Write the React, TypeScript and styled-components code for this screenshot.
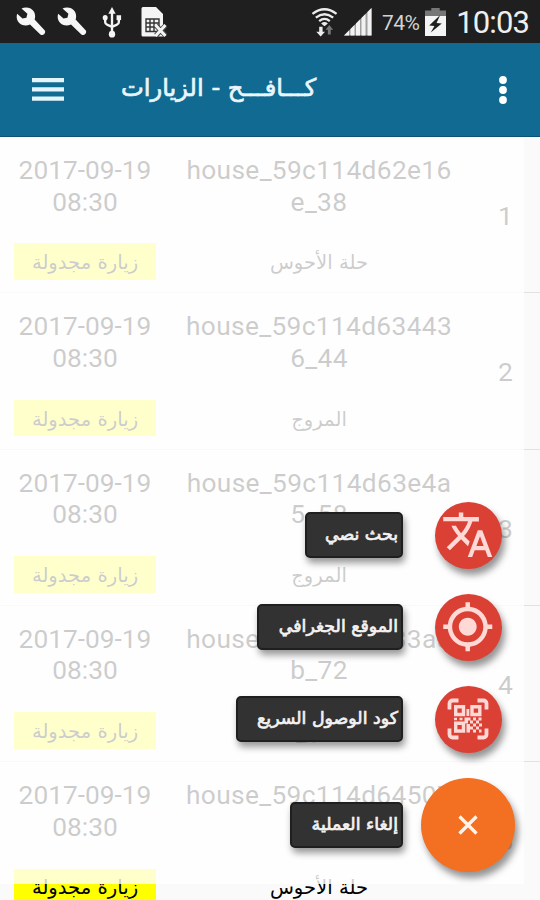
import React from 'react';
import styled, { createGlobalStyle } from 'styled-components';
import { MdTranslate, MdGpsFixed } from 'react-icons/md';

const GlobalStyle = createGlobalStyle`
  * { box-sizing: border-box; }
  html, body { margin: 0; padding: 0; background: #fafafa; overflow: hidden; }
`;

const Screen = styled.div`
  position: relative;
  width: 540px;
  height: 900px;
  overflow: hidden;
  display: flex;
  flex-direction: column;
  background: #fafafa;
  font-family: Roboto, 'DejaVu Sans', sans-serif;
`;

const StatusBar = styled.header`
  flex: none;
  height: 43px;
  padding: 1px 11px 0 16px;
  background: #1f1f1f;
  color: #efefef;
  display: flex;
  align-items: center;
  justify-content: space-between;
`;

const StatusGroup = styled.div<{ $gap: number }>`
  display: flex;
  align-items: center;
  gap: ${(p) => p.$gap}px;
`;

const Percent = styled.span`
  font-size: 21px;
  letter-spacing: -0.6px;
  color: #d2d2d2;
  margin: 2px 0 0 4px;
`;

const Clock = styled.span`
  font-size: 31px;
  letter-spacing: -0.9px;
  margin-left: 4px;
`;

const AppBar = styled.div`
  flex: none;
  height: 94px;
  background: #106a91;
  border-bottom: 1px solid #0b5279;
  display: flex;
  align-items: center;
  padding: 0 32px 0 32px;
`;

const Title = styled.h1`
  margin: 0 auto 4px 57px;
  direction: rtl;
  color: #e9f6fb;
  font: 400 24.2px 'DejaVu Sans', sans-serif;
  -webkit-text-stroke: 0.7px #e9f6fb;
  white-space: nowrap;
`;

const List = styled.main`
  flex: 1;
  min-height: 0;
  overflow: hidden;
`;

const Visit = styled.article`
  height: 156.3px;
  padding: 18.2px 14px 0;
  border-bottom: 1px solid #e2e2e2;
  display: grid;
  grid-template-columns: 142px 326px 44px;
  color: #000;
`;

const Column = styled.div`
  display: flex;
  flex-direction: column;
  align-items: center;
`;

const Value = styled.div<{ $spacing?: number }>`
  height: 88.3px;
  text-align: center;
  font-size: 26.3px;
  letter-spacing: ${(p) => p.$spacing ?? 0}px;
  line-height: 31.4px;
  white-space: pre-line;
`;

const Tag = styled.div<{ $bg?: string }>`
  width: 142px;
  height: 36.5px;
  padding-top: 2px;
  display: flex;
  align-items: center;
  justify-content: center;
  direction: rtl;
  background: ${(p) => p.$bg ?? 'transparent'};
  font: 19.6px 'DejaVu Sans', sans-serif;
  white-space: nowrap;
`;

const Index = styled.div`
  padding-top: 45px;
  text-align: center;
  font-size: 26.5px;
  line-height: 31px;
  margin-left: 3px;
`;

const Scrim = styled.div`
  position: absolute;
  left: 0;
  top: 137px;
  width: 524px;
  height: 747px;
  background: rgba(255, 255, 255, 0.8);
`;

const SpeedDial = styled.div`
  position: absolute;
  right: 25px;
  top: 501.5px;
  display: flex;
  flex-direction: column;
  gap: 25px;
`;

const DialRow = styled.div`
  display: flex;
  align-items: center;
  justify-content: flex-end;
`;

const DialLabel = styled.span<{ $width: number }>`
  width: ${(p) => p.$width}px;
  height: 46px;
  padding: 0 3px 2px;
  border-radius: 5px;
  border: 2px solid #1f1f1f;
  background: #323232;
  box-shadow: 2px 5px 7px rgba(0, 0, 0, 0.4);
  color: #f2f2f2;
  direction: rtl;
  display: flex;
  align-items: center;
  font: 400 17.4px 'DejaVu Sans', sans-serif;
  -webkit-text-stroke: 0.7px #f2f2f2;
  white-space: nowrap;
`;

const Fab = styled.button<{ $main?: boolean }>`
  flex: none;
  width: ${(p) => (p.$main ? 94 : 67)}px;
  height: ${(p) => (p.$main ? 94 : 67)}px;
  margin: ${(p) => (p.$main ? '0 0 0 18px' : '0 13.5px 0 31.5px')};
  padding: 0;
  border: 0;
  border-radius: 50%;
  background: ${(p) => (p.$main ? '#f36f21' : '#db4035')};
  color: #ffd9d6;
  box-shadow: 3px 6px 7px rgba(0, 0, 0, 0.42);
  display: flex;
  align-items: center;
  justify-content: center;
`;

const WrenchIcon = () => (
  <svg width="30" height="31" viewBox="0 0 30 31">
    <path
      d="M5.500 1.500C10-.5 15.800.8 18 4.800c1.400 2.700 1.400 5.400.6 7.800l10 10.600c2 2.500-1.500 6.300-4.200 4.200L14 17.600C9.600 19.400 5.300 18.400 2.600 15.200.6 12.600.2 9.400 1.200 6.800l5.300 4.600 3.900-.7 1-4z"
      fill="#f6f6f6"
    />
  </svg>
);

const UsbIcon = () => (
  <svg width="20" height="31" viewBox="0 0 22 32" preserveAspectRatio="none" fill="none" stroke="#f4f4f4" strokeWidth="2.600">
    <path d="M11 5v22M3.500 12v3.500q0 2 2 2.700L11 20.500M18.500 12v3.500q0 2-2 2.700L11 20.500" />
    <path d="M11 0l4 7H7z" fill="#f4f4f4" stroke="none" />
    <circle cx="11" cy="28" r="3.500" fill="#f4f4f4" stroke="none" />
    <circle cx="3.500" cy="11" r="2.700" fill="#f4f4f4" stroke="none" />
    <path d="M16 8.500h5v5h-5z" fill="#f4f4f4" stroke="none" />
  </svg>
);

const SimIcon = () => (
  <svg width="27" height="31" viewBox="0 0 27 31">
    <path d="M2 0h13l7 7v22.500H2a1.500 1.500 0 0 1-1.500-1.500V1.500A1.500 1.500 0 0 1 2 0z" fill="#f4f4f4" />
    <path d="M5 12h13v12.500H5zM5 16h13M5 20h13M9 12v12M13 12v12" fill="none" stroke="#333" strokeWidth="1.400" />
    <path d="M15 18.500l9.500 10M24.500 18.500L15 28.500" stroke="#444" strokeWidth="5" />
    <path d="M14.500 18l10 11M24.500 18L14.500 29" stroke="#f4f4f4" strokeWidth="3" />
  </svg>
);

const StatusLeft = styled(StatusGroup)`
  svg:nth-child(3) { margin-left: 4px; }
  svg:nth-child(4) { margin-left: 8px; }
`;

const WifiIcon = () => (
  <svg width="27" height="31" viewBox="0 0 28 31">
    <g fill="none" stroke="#ececec" strokeWidth="2.400">
      <path d="M1.500 6.500q12.500-9.500 25 0M5 10.500q9-7 18 0M8.500 14q5.500-4.500 11 0" />
    </g>
    <path d="M10.500 16.500q3.500-3 7 0L14 19.500z" fill="#ececec" />
    <path d="M8.500 20h3.500v5h2.500l-4.500 5-4.500-5h3z" fill="#ececec" />
    <path d="M17.500 28v-5H15l4-5 4 5h-2.500v5z" fill="#777" />
  </svg>
);

const SignalIcon = () => (
  <svg width="28" height="28" viewBox="0 0 28 28">
    <path d="M0 27.500L27.500 0v27.500z" fill="#a0a0a0" />
    <path d="M0 27.500l5-5v5zM6.500 21l4-4v10.500h-4zM12 15.500l4-4v16h-4zM17.500 10l4-4v21.500h-4zM23.500 4l4-4v27.500h-4z" fill="#f2f2f2" />
  </svg>
);

const BatteryIcon = () => (
  <svg width="21" height="28" viewBox="0 0 20 28" preserveAspectRatio="none">
    <path d="M0 2.500h6V0h8v2.500h6V9H0z" fill="#777" />
    <path d="M0 8h20v20H0z" fill="#f4f4f4" />
    <path d="M14.500 7L4 17.500l5 .5-3.500 6.500L16 15.500l-5-.5z" fill="#1f1f1f" />
  </svg>
);

const MenuIcon = () => (
  <svg width="32" height="24" viewBox="0 0 32 24" fill="#e3f5fa">
    <path d="M0 0h32v4.300H0zM0 9.300h32v4.200H0zM0 18.600h32v4.200H0z" />
  </svg>
);

const MoreIcon = () => (
  <svg width="10" height="30" viewBox="0 0 10 30" fill="#fff">
    <circle cx="5" cy="5" r="3.900" />
    <circle cx="5" cy="15" r="3.900" />
    <circle cx="5" cy="25" r="3.900" />
  </svg>
);

const QrIcon = () => (
  <svg width="42" height="42" viewBox="0 0 42 42">
    <g fill="none" stroke="#ffd9d6">
      <path
        strokeWidth="3.800"
        d="M2.500 11.500V5.500a3 3 0 0 1 3-3h6M30.500 2.500h6a3 3 0 0 1 3 3v6M39.500 30.500v6a3 3 0 0 1-3 3h-6M11.500 39.500h-6a3 3 0 0 1-3-3v-6"
      />
      <path strokeWidth="3.400" d="M8.700 8.700h7.800v7.800H8.700zM25 8.700h7.800v7.800H25zM8.700 25.200h7.800V33H8.700z" />
    </g>
    <path
      fill="#ffd9d6"
      d="M19.500 11h2.800v7h-2.800zM7 19.800h3v2.500H7zM12.500 19.800h3v2.500h-3zM17.500 19.500h6v3h-2.500v3h-3.500zM26 19.500h3v3h-3zM31.500 19.500h3v3h-3zM23 22.500h3v3h-3zM29 22.500h3v3h-3zM26 25.500h3v3h-3zM32 25.500h3v3h-3zM19.500 26h3.500v8.500h-3.500zM23 28.500h3v3h-3zM29 28.500h3v3h-3zM26 31.500h3v3h-3zM32 31.500h2.500v3H32z"
    />
  </svg>
);

const CloseIcon = () => (
  <svg width="20" height="20" viewBox="0 0 20 20">
    <path d="M1.500 1.500l17 17M18.500 1.500l-17 17" stroke="#fff3ea" strokeWidth="3.400" />
  </svg>
);

const visits = [
  { house: 'house_59c114d62e16\ne_38', area: 'حلة الأحوس' },
  { house: 'house_59c114d63443\n6_44', area: 'المروج' },
  { house: 'house_59c114d63e4a\n5_58', area: 'المروج' },
  { house: 'house_59c114d633a8\nb_72', area: 'المروج' },
  { house: 'house_59c114d64507\n8_80', area: 'حلة الأحوس' },
];

const actions = [
  { label: 'بحث نصي', width: 98, icon: <MdTranslate size={53.5} /> },
  { label: 'الموقع الجغرافي', width: 146, icon: <MdGpsFixed size={53.5} /> },
  { label: 'كود الوصول السريع', width: 167, icon: <QrIcon /> },
];

export default function App() {
  return (
    <Screen>
      <GlobalStyle />
      <StatusBar>
        <StatusLeft $gap={11}>
          <WrenchIcon />
          <WrenchIcon />
          <UsbIcon />
          <SimIcon />
        </StatusLeft>
        <StatusGroup $gap={6}>
          <WifiIcon />
          <SignalIcon />
          <Percent>74%</Percent>
          <BatteryIcon />
          <Clock>10:03</Clock>
        </StatusGroup>
      </StatusBar>
      <AppBar>
        <MenuIcon />
        <Title>كـــافـــح - الزيارات</Title>
        <MoreIcon />
      </AppBar>
      <List>
        {visits.map((v, i) => (
          <Visit key={v.house}>
            <Column>
              <Value>{'2017-09-19\n08:30'}</Value>
              <Tag $bg="#ffff00">زيارة مجدولة</Tag>
            </Column>
            <Column>
              <Value $spacing={0.35}>{v.house}</Value>
              <Tag>{v.area}</Tag>
            </Column>
            <Index>{i + 1}</Index>
          </Visit>
        ))}
      </List>
      <Scrim />
      <SpeedDial>
        {actions.map((a) => (
          <DialRow key={a.label}>
            <DialLabel $width={a.width}>{a.label}</DialLabel>
            <Fab>{a.icon}</Fab>
          </DialRow>
        ))}
        <DialRow>
          <DialLabel $width={113}>إلغاء العملية</DialLabel>
          <Fab $main>
            <CloseIcon />
          </Fab>
        </DialRow>
      </SpeedDial>
    </Screen>
  );
}
